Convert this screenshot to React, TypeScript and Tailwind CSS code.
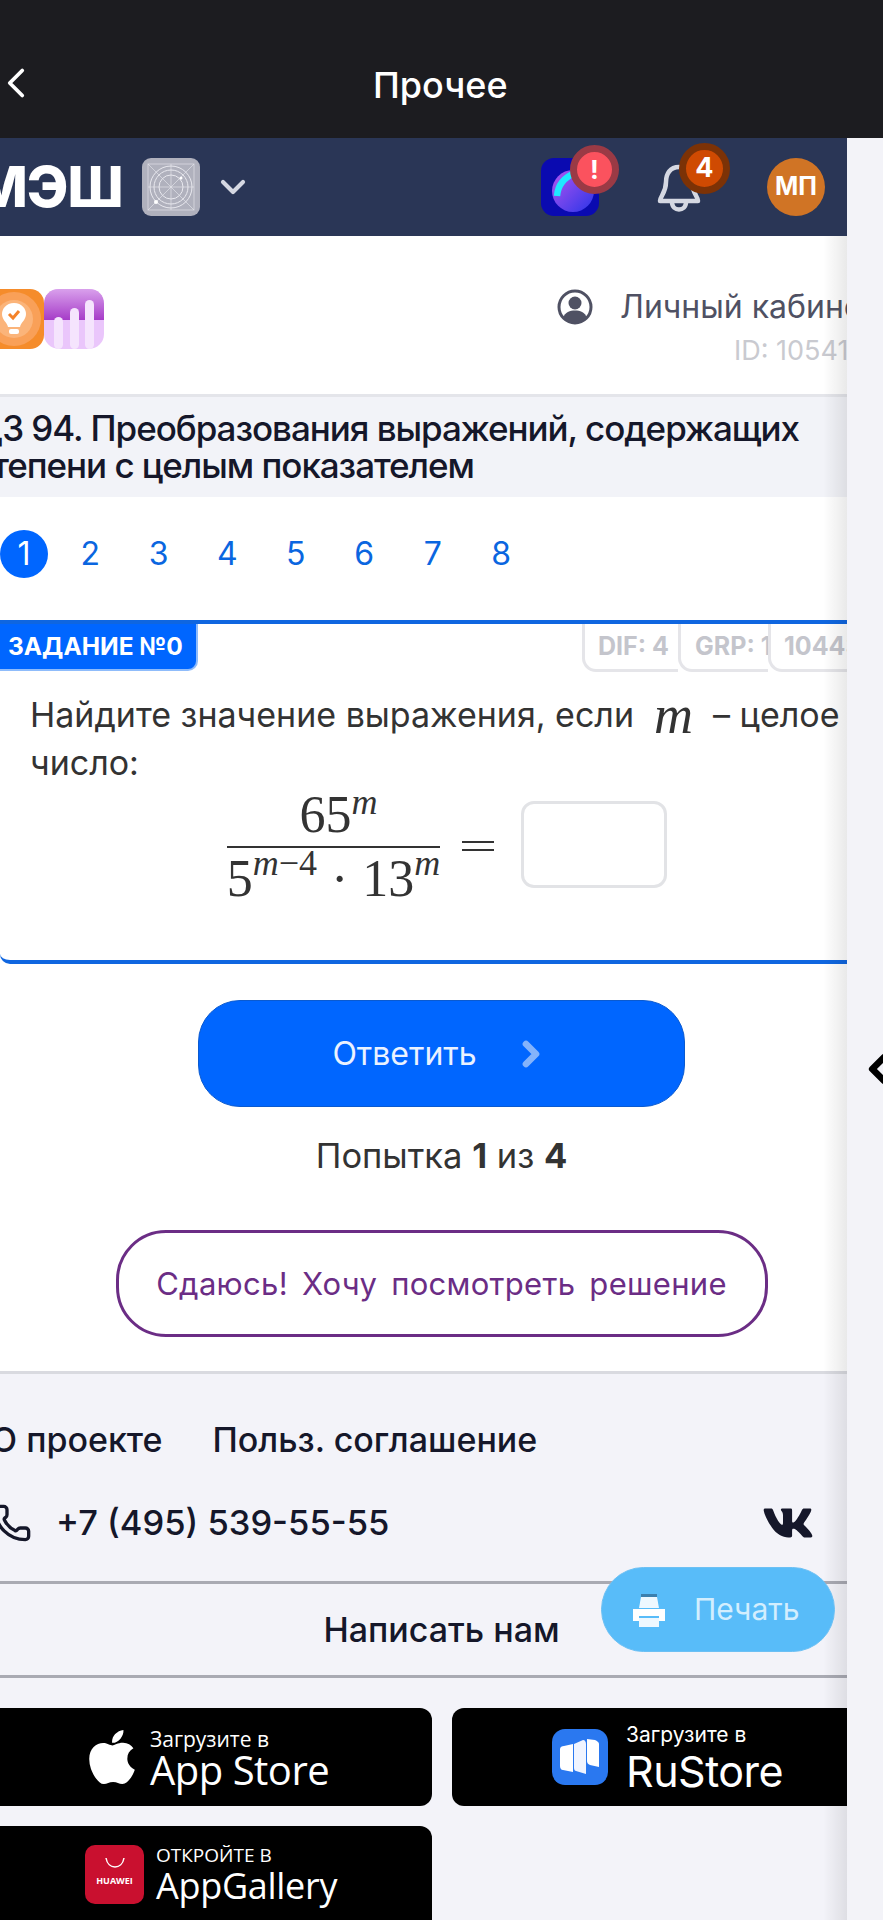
import React from "react";
import { FaApple, FaVk } from "react-icons/fa";
import { Phone, ChevronDown, ChevronLeft, ChevronRight } from "lucide-react";

const inter = "font-['Inter','Noto_Sans',sans-serif]";

function MeshTile() {
  return (
    <svg width="58" height="58" viewBox="0 0 58 58" className="ml-[19px] shrink-0">
      <rect width="58" height="58" rx="9" fill="#b0b1bd" />
      <g fill="none" stroke="#e9e9ef" strokeWidth="1">
        <path d="M6 6L52 52M52 6L6 52M29 6V52M6 29H52" strokeOpacity=".6" />
        <rect x="6" y="6" width="46" height="46" strokeOpacity=".6" />
        <circle cx="29" cy="29" r="21" />
        <circle cx="29" cy="29" r="17" />
        <circle cx="29" cy="29" r="12" />
      </g>
      <circle cx="14" cy="44" r="2" fill="#fff" />
      <circle cx="39" cy="20" r="1.5" fill="#fff" />
    </svg>
  );
}

function MeshApp() {
  return (
    <div className="relative h-[58px] w-[58px] shrink-0">
      <svg width="58" height="58" viewBox="0 0 58 58">
        <defs>
          <linearGradient id="orb" x1="0" y1="0" x2="1" y2="1">
            <stop offset="0" stopColor="#b455f0" />
            <stop offset="1" stopColor="#2a35e8" />
          </linearGradient>
        </defs>
        <rect width="58" height="58" rx="13" fill="#0a0ab0" />
        <circle cx="32" cy="33" r="21" fill="url(#orb)" />
        <path d="M16 38C17 26 24 19 34 15" fill="none" stroke="#1fe8ff" strokeWidth="6.5" />
      </svg>
      <div className="absolute left-[29px] top-[-13px] flex h-[49px] w-[49px] items-center justify-center rounded-full border-[7px] border-[#9a3a45] bg-[#fb525e] text-[26px] font-bold text-white">
        !
      </div>
    </div>
  );
}

function Bell() {
  return (
    <div className="relative ml-[58px] h-[58px] w-[44px] shrink-0">
      <svg width="44" height="52" viewBox="0 0 44 52" className="mt-[6px]" fill="none" stroke="#d5d8e2" strokeWidth="4.5" strokeLinecap="round" strokeLinejoin="round">
        <path d="M22 3C13 3 9 10 9 18C9 29 3 32 3 37H41C41 32 35 29 35 18C35 10 31 3 22 3Z" />
        <path d="M15 38C15 48 29 48 29 38" />
      </svg>
      <div className="absolute left-[22px] top-[-15px] flex h-[51px] w-[51px] items-center justify-center rounded-full border-[7px] border-[#7c3206] bg-[#cf4a02] text-[27px] font-bold text-white">
        4
      </div>
    </div>
  );
}

function App() {
  return (
    <div className={`${inter} flex h-[1920px] w-[883px] flex-col overflow-hidden bg-[#f3f3f9]`}>
      <header className="flex h-[138px] shrink-0 items-end bg-[#1c1c20] pb-[33px] text-white">
        <ChevronLeft className="mb-[-6px] ml-[-9px] h-[56px] w-[50px] shrink-0" strokeWidth={1.8} />
        <div className="ml-[332px] text-[36px] font-medium leading-[40px]">Прочее</div>
      </header>

      <div className="flex min-h-0 flex-1">
        <main className="relative flex w-[847px] shrink-0 flex-col overflow-hidden bg-white">
          <nav className="flex h-[98px] shrink-0 items-center bg-[#2a3656] pr-[22px]">
            <div className="ml-[-25px] text-[56px] font-extrabold leading-none tracking-[-1px] text-white">МЭШ</div>
            <MeshTile />
            <ChevronDown className="ml-[13px] h-[40px] w-[40px] shrink-0 text-[#d5d8e2]" strokeWidth={2.5} />
            <div className="ml-auto flex items-center">
              <MeshApp />
              <Bell />
              <div className="ml-[66px] flex h-[58px] w-[58px] shrink-0 items-center justify-center rounded-full bg-[#d07425] text-[25px] font-bold text-white">
                МП
              </div>
            </div>
          </nav>

          <section className="flex h-[161px] shrink-0 border-b-[3px] border-[#e4e5ea]">
            <div className="ml-[-16px] mt-[53px] flex h-[60px]">
              <svg width="60" height="60" viewBox="0 0 60 60">
                <rect width="60" height="60" rx="14" fill="#f58c2b" />
                <circle cx="30" cy="30" r="27" fill="#f9a058" />
                <circle cx="30" cy="30" r="19" fill="#fbb47a" />
                <path d="M30 14C22 14 18 20 18 25C18 31 23 33 24 38H36C37 33 42 31 42 25C42 20 38 14 30 14Z" fill="#fff" />
                <rect x="25" y="40" width="10" height="5" rx="2" fill="#fff" />
                <path d="M25 25L29 29L35 22" fill="none" stroke="#f4832a" strokeWidth="3" />
              </svg>
              <svg width="60" height="60" viewBox="0 0 60 60">
                <defs>
                  <linearGradient id="pur" x1="0" y1="0" x2="0" y2="1">
                    <stop offset="0" stopColor="#d9a0ec" />
                    <stop offset="1" stopColor="#a63cc8" />
                  </linearGradient>
                </defs>
                <rect width="60" height="60" rx="15" fill="#eac6fb" />
                <path d="M0 31V15C0 6 6 0 15 0H45C54 0 60 6 60 15V31Z" fill="url(#pur)" />
                <g fill="#f5e4fd">
                  <rect x="10" y="28" width="9" height="32" rx="4.5" />
                  <rect x="26" y="19" width="9" height="41" rx="4.5" />
                  <rect x="41" y="11" width="9" height="49" rx="4.5" />
                </g>
              </svg>
            </div>
            <div className="ml-auto flex flex-col items-end pt-[51px]">
              <div className="flex w-[290px] items-center whitespace-nowrap text-[32px] leading-[40px] text-[#4f5163]">
                <svg width="36" height="36" viewBox="0 0 36 36" className="shrink-0">
                  <circle cx="18" cy="18" r="16" fill="none" stroke="#4f5163" strokeWidth="3" />
                  <circle cx="18" cy="14" r="6.5" fill="#4f5163" />
                  <path d="M6 29C8 23 13 21.500 18 21.500C23 21.500 28 23 30 29C25 35 11 35 6 29Z" fill="#4f5163" />
                </svg>
                <span className="ml-[27px]">Личный кабинет</span>
              </div>
              <div className="mt-[8px] w-[113px] whitespace-nowrap text-[27px] leading-[32px] text-[#c9cad0]">ID: 105412</div>
            </div>
          </section>

          <section className="h-[100px] shrink-0 bg-[#f2f3f8] pt-[13px]">
            <div className="ml-[-26px] whitespace-nowrap text-[35px] font-medium leading-[37px] tracking-[-1.050px] text-[#15172a]">
              ДЗ 94. Преобразования выражений, содержащих
              <br />
              <span className="ml-[-1px]">степени с целым показателем</span>
            </div>
          </section>

          <div className="flex h-[123px] shrink-0 items-center pb-[9px] text-[32px] text-[#0a66e0]">
            <div className="flex h-[48px] w-[48px] items-center justify-center rounded-full bg-[#0066ff] text-white">1</div>
            {["2", "3", "4", "5", "6", "7", "8"].map((n, i) => (
              <div key={n} className={`w-[68.500px] text-center ${i === 0 ? "ml-[8px]" : ""}`}>{n}</div>
            ))}
          </div>

          <section className="h-[344px] shrink-0 rounded-bl-[10px] border-y-[4px] border-[#0f66e0]">
            <div className="flex h-[47px] items-start">
              <div className="flex h-[47px] w-[198px] shrink-0 items-center rounded-br-[10px] border-b-[2px] border-r-[2px] border-[#8fbcfb] bg-[#0066ff] pl-[8px] text-[24.500px] font-bold text-white">
                ЗАДАНИЕ №0
              </div>
              <div className="ml-auto flex h-[48px] w-[265px] overflow-hidden whitespace-nowrap text-[25px] font-bold leading-[44px] text-[#c4c5cc]">
                <div className="w-[96px] shrink-0 rounded-bl-[14px] border-b-[3px] border-l-[3px] border-[#e5e5e9] pl-[13px]">DIF: 4</div>
                <div className="w-[90px] shrink-0 rounded-bl-[14px] border-b-[3px] border-l-[3px] border-[#e5e5e9] pl-[14px]">GRP: 1</div>
                <div className="w-[90px] shrink-0 rounded-bl-[14px] border-b-[3px] border-l-[3px] border-[#e5e5e9] pl-[13px]">104432</div>
              </div>
            </div>

            <div className="mt-[20px] pl-[30px] text-[34px] leading-[48px] text-[#333333]">
              <div className="flex items-center whitespace-nowrap">
                Найдите значение выражения, если
                <span className="ml-[20px] font-['Liberation_Serif',serif] text-[54px] italic leading-[44px]">m</span>
                <span className="ml-[20px]">– целое</span>
              </div>
              <div>число:</div>
            </div>

            <div className="ml-[227px] mt-[3px] flex items-center font-['Liberation_Serif',serif] text-[#333333]">
              <div className="flex w-[213px] shrink-0 flex-col items-center">
                <div className="flex h-[56px] items-start pl-[10px] text-[52px] leading-[50px]">
                  65<span className="text-[36px] italic leading-[24px]">m</span>
                </div>
                <div className="h-[2px] w-full bg-[#333333]" />
                <div className="flex h-[50px] items-start whitespace-nowrap text-[52px] leading-[62px]">
                  5<span className="text-[36px] italic leading-[30px]">m</span>
                  <span className="text-[36px] leading-[30px]">−4</span>
                  <span className="mx-[14px]">·</span>13<span className="text-[36px] italic leading-[30px]">m</span>
                </div>
              </div>
              <div className="ml-[22px] mt-[4px] flex h-[10px] w-[32px] shrink-0 flex-col justify-between">
                <div className="h-[2px] bg-[#333333]" />
                <div className="h-[2px] bg-[#333333]" />
              </div>
              <div className="ml-[27px] h-[87px] w-[146px] shrink-0 rounded-[13px] border-[3px] border-[#e2e3e6] bg-white" />
            </div>
          </section>

          <div className="flex h-[410px] shrink-0 flex-col items-center border-b-[3px] border-[#d9dae0] pl-[36px] pt-[36px]">
            <div className="flex h-[107px] w-[487px] items-center justify-center rounded-[42px] border border-[#0a5ad0] bg-[#0066ff] text-[32px] text-[#eaf2ff]">
              Ответить
              <ChevronRight className="ml-[34px] h-[40px] w-[40px] text-[#84b3fb]" strokeWidth={4} />
            </div>
            <div className="mt-[29px] whitespace-nowrap text-[34.500px] leading-[40px] text-[#333333]">
              Попытка <b>1</b> из <b>4</b>
            </div>
            <div className="mt-[54px] flex h-[107px] w-[652px] items-center justify-center rounded-[50px] border-[3px] border-[#6b2d85] pt-[2px] text-[31px] tracking-[0.3px] text-[#6b2d85] [word-spacing:5px]">
              Сдаюсь! Хочу посмотреть решение
            </div>
          </div>

          <footer className="min-h-0 flex-1 bg-[#f3f3f9] pt-[46px] text-[#15172a]">
            <div className="ml-[-9px] flex h-[40px] items-center whitespace-nowrap text-[34px] font-medium leading-[40px]">
              <span>О проекте</span>
              <span className="ml-[50px]">Польз. соглашение</span>
            </div>
            <div className="mt-[35px] flex h-[56px] items-center pr-[33px]">
              <Phone className="ml-[-8px] h-[42px] w-[40px] shrink-0" strokeWidth={2} />
              <span className="ml-[24px] whitespace-nowrap text-[34.500px] font-medium">+7 (495) 539-55-55</span>
              <FaVk className="ml-auto h-[52px] w-[52px] text-[#15172a]" />
            </div>
            <div className="ml-[-20px] mr-[-20px] mt-[30px] flex h-[97px] items-center justify-center rounded-[14px] border-[3px] border-[#a9aab3] pl-[36px] text-[34px] font-medium leading-[40px]">
              Написать нам
            </div>
            <div className="mt-[30px] flex gap-[20px]">
              <div className="ml-[-20px] flex h-[98px] w-[452px] shrink-0 items-center rounded-xl bg-black pl-[106px] text-white">
                <FaApple className="h-[62px] w-[52px] shrink-0" />
                <div className="ml-[12px] font-['Open_Sans',sans-serif]">
                  <div className="text-[21px] leading-[24px]">Загрузите в</div>
                  <div className="text-[40px] font-medium leading-[37px] tracking-[-0.500px]">App Store</div>
                </div>
              </div>
              <div className="flex h-[98px] flex-1 items-center rounded-l-xl bg-black pl-[100px] text-white">
                <svg width="56" height="56" viewBox="0 0 56 56" className="shrink-0">
                  <rect width="56" height="56" rx="13" fill="#2a78f0" />
                  <path d="M8 20C8 18 10 17 12 17L21 15V43L11 41C9 41 8 39 8 37Z" fill="#fff" />
                  <path d="M22 15L31 11C33 11 34 13 34 15V45L24 42C23 42 22 41 22 39Z" fill="#f0f4ff" />
                  <path d="M35 10L43 11C45 12 47 13 47 15V38L38 36C36 35 35 34 35 32Z" fill="#fff" />
                </svg>
                <div className="ml-[18px] mt-[2px] font-['Inter',sans-serif]">
                  <div className="text-[21px] leading-[26px]">Загрузите в</div>
                  <div className="text-[43px] leading-[46px] tracking-[-0.500px]">RuStore</div>
                </div>
              </div>
            </div>
            <div className="ml-[-20px] mt-[20px] flex h-[110px] w-[452px] items-start rounded-xl bg-black pl-[105px] pt-[19px] text-white">
              <div className="relative flex h-[59px] w-[59px] shrink-0 flex-col items-center rounded-[10px] bg-[#c9102f]">
                <svg width="22" height="12" viewBox="0 0 22 12" className="mt-[12px]" fill="none" stroke="#fff" strokeWidth="1.500">
                  <path d="M2 1C4 13 18 13 20 1" />
                </svg>
                <div className="mt-[6px] font-['Open_Sans',sans-serif] text-[9px] font-bold leading-[12px]">HUAWEI</div>
              </div>
              <div className="ml-[12px] mt-[-2px] font-['Open_Sans',sans-serif]">
                <div className="text-[19px] leading-[24px]">ОТКРОЙТЕ В</div>
                <div className="text-[36px] leading-[37px] tracking-[-0.300px]">AppGallery</div>
              </div>
            </div>
          </footer>

          <div className="pointer-events-none absolute bottom-0 right-0 top-[98px] w-[24px] bg-gradient-to-r from-transparent to-[#00000016]" />
          <div className="absolute left-[601px] top-[1429px] flex h-[85px] w-[234px] items-center rounded-[43px] border border-[#6cc0f4] bg-[#58bcf9] pl-[30px] text-[30px] text-[#d3eefe]">
            <svg width="34" height="36" viewBox="0 0 34 36" className="shrink-0">
              <path d="M9 5H25L27 16H7Z" fill="#eef8ff" />
              <path d="M9 2H25V5H9Z" fill="#3b7fae" />
              <path d="M1 17H33V29H27V24H7V29H1Z" fill="#fff" />
              <rect x="7" y="26" width="20" height="9" fill="#eef8ff" />
            </svg>
            <span className="ml-[28px]">Печать</span>
          </div>
        </main>

        <aside className="flex min-h-0 flex-1 items-start bg-[#f3f3f8] pt-[900px]">
          <ChevronLeft className="ml-[8px] h-[62px] w-[46px] shrink-0 text-black" strokeWidth={3.5} />
        </aside>
      </div>
    </div>
  );
}

export default App;
